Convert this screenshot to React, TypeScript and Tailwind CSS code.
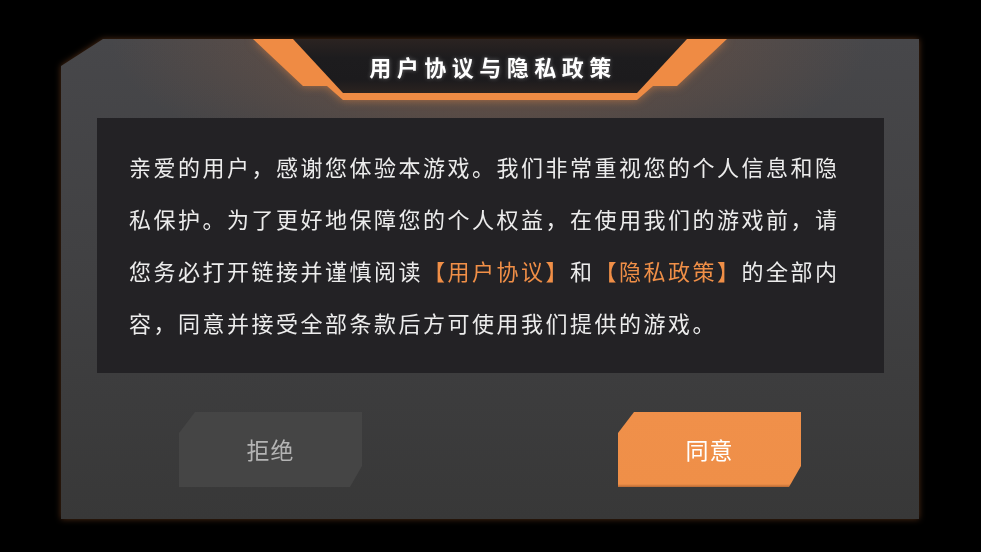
import React from "react";

const lines: React.ReactNode[] = [
  <>亲爱的用户，感谢您体验本游戏。我们非常重视您的个人信息和隐</>,
  <>私保护。为了更好地保障您的个人权益，在使用我们的游戏前，请</>,
  <>
    您务必打开链接并谨慎阅读<span className="text-[#f08f47]">【用户协议】</span>和
    <span className="text-[#f08f47]">【隐私政策】</span>的全部内
  </>,
  <>容，同意并接受全部条款后方可使用我们提供的游戏。</>,
];

export default function App() {
  return (
    <div className="w-[981px] h-[552px] bg-black pt-[37px] pl-[59px] overflow-hidden font-['Noto_Sans_CJK_SC','Noto_Sans',sans-serif]">
      <div className="w-[862px] h-[484px] [filter:drop-shadow(0_0_3px_rgba(232,130,60,0.35))]">
        <div className="w-full h-full p-[2px] [clip-path:polygon(41px_0,100%_0,100%_100%,0_100%,0_26px)] bg-[linear-gradient(135deg,#f08a40_0,#f08a40_34px,transparent_40px),linear-gradient(90deg,#d27a3e,#9a6444_40%,#7a6258_100%)_top/100%_2px_no-repeat,#6a625e]">
          <div className="w-full h-full flex flex-col [clip-path:polygon(42px_0,100%_0,100%_100%,0_100%,0_27px)] bg-[radial-gradient(ellipse_380px_140px_at_50%_0%,rgba(200,112,60,0.32),transparent),linear-gradient(180deg,#47474a_0%,#414143_45%,#383838_100%)]">
            {/* Header */}
            <div className="mx-auto w-[474px] h-[61px] grid [filter:drop-shadow(0_0_5px_rgba(240,140,70,0.55))]">
              <div className="[grid-area:1/1] bg-[#ef8b44] [clip-path:polygon(0_0,474px_0,424px_47px,400px_47px,384px_61px,90px_61px,74px_47px,50px_47px)]" />
              <div className="[grid-area:1/1] h-[54px] flex items-center justify-center pl-[6px] bg-[linear-gradient(180deg,#2b2321_0%,#1d1c1e_35%,#1c1b1d_75%,#2c2320_100%)] [clip-path:polygon(40px_0,434px_0,384px_54px,90px_54px)]">
                <span className="text-white font-bold text-[22px] leading-none tracking-[5.5px] [text-shadow:0_0_4px_rgba(255,255,255,0.35)]">
                  用户协议与隐私政策
                </span>
              </div>
            </div>

            {/* Text box */}
            <div className="mt-[18px] ml-[36px] w-[787px] h-[255px] bg-[#232225] pl-[32px] pt-[22px]">
              {lines.map((l, i) => (
                <div
                  key={i}
                  className="whitespace-nowrap text-[22px] leading-[52px] tracking-[2.5px] text-[#ececec]"
                >
                  {l}
                </div>
              ))}
            </div>

            {/* Buttons */}
            <div className="mt-[39px] flex justify-center gap-[256px]">
              <div className="w-[183px] h-[75px] bg-[#454545] flex items-center justify-center [clip-path:polygon(16px_0,100%_0,100%_54px,171px_100%,0_100%,0_21px)]">
                <span className="text-[23px] text-[#b4b4b4] tracking-[1px]">拒绝</span>
              </div>
              <div className="w-[183px] h-[75px] bg-[linear-gradient(180deg,#f0904a_0%,#ef8f48_96%,#b86a35_100%)] flex items-center justify-center [clip-path:polygon(16px_0,100%_0,100%_54px,171px_100%,0_100%,0_21px)]">
                <span className="text-[23px] text-white tracking-[1px]">同意</span>
              </div>
            </div>
          </div>
        </div>
      </div>
    </div>
  );
}
